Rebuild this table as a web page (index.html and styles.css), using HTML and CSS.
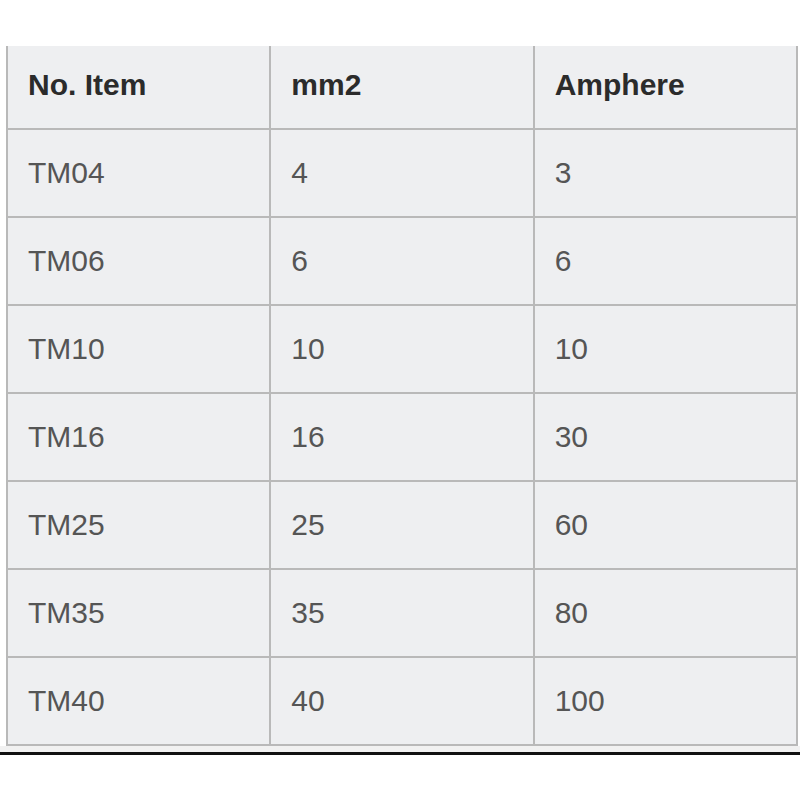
FILE: index.html
```html
<!DOCTYPE html>
<html>
<head>
<meta charset="utf-8">
<link rel="stylesheet" href="styles.css">
</head>
<body>
<div class="page">
  <table class="spec">
    <thead>
      <tr class="head-row"><th>No. Item</th><th>mm2</th><th>Amphere</th></tr>
    </thead>
    <tbody>
      <tr><td>TM04</td><td>4</td><td>3</td></tr>
      <tr><td>TM06</td><td>6</td><td>6</td></tr>
      <tr><td>TM10</td><td>10</td><td>10</td></tr>
      <tr><td>TM16</td><td>16</td><td>30</td></tr>
      <tr><td>TM25</td><td>25</td><td>60</td></tr>
      <tr><td>TM35</td><td>35</td><td>80</td></tr>
      <tr><td>TM40</td><td>40</td><td>100</td></tr>
    </tbody>
  </table>
  <div class="strip"></div>
</div>
</body>
</html>
```
FILE: styles.css
```css
html, body {
  margin: 0;
  padding: 0;
  background: #ffffff;
}
.page {
  padding-top: 46px;
  font-family: "Liberation Sans", Arial, sans-serif;
}
.spec {
  margin-left: 6px;
  width: 792px;
  border-collapse: collapse;
  table-layout: fixed;
  background: #eeeff1;
  border-left: 2px solid #b9b9b9;
  border-right: 2px solid #b9b9b9;
  border-bottom: 2px solid #b9b9b9;
}
.spec th, .spec td {
  border: 2px solid #b9b9b9;
  text-align: left;
  font-size: 30px;
  padding: 0 0 0 20px;
  vertical-align: middle;
}
.spec thead th {
  border-top: none;
}
.spec th {
  font-weight: bold;
  color: #2b2b2b;
  height: 83px;
  padding-bottom: 5px;
  box-sizing: border-box;
}
.spec td {
  color: #555555;
  height: 88px;
  box-sizing: border-box;
}
.spec th:nth-child(2), .spec td:nth-child(2),
.spec th:nth-child(3), .spec td:nth-child(3) {
  padding-left: 20px;
}
.strip {
  height: 6px;
  background: #f1f1f1;
  border-bottom: 3px solid #111111;
}
```
